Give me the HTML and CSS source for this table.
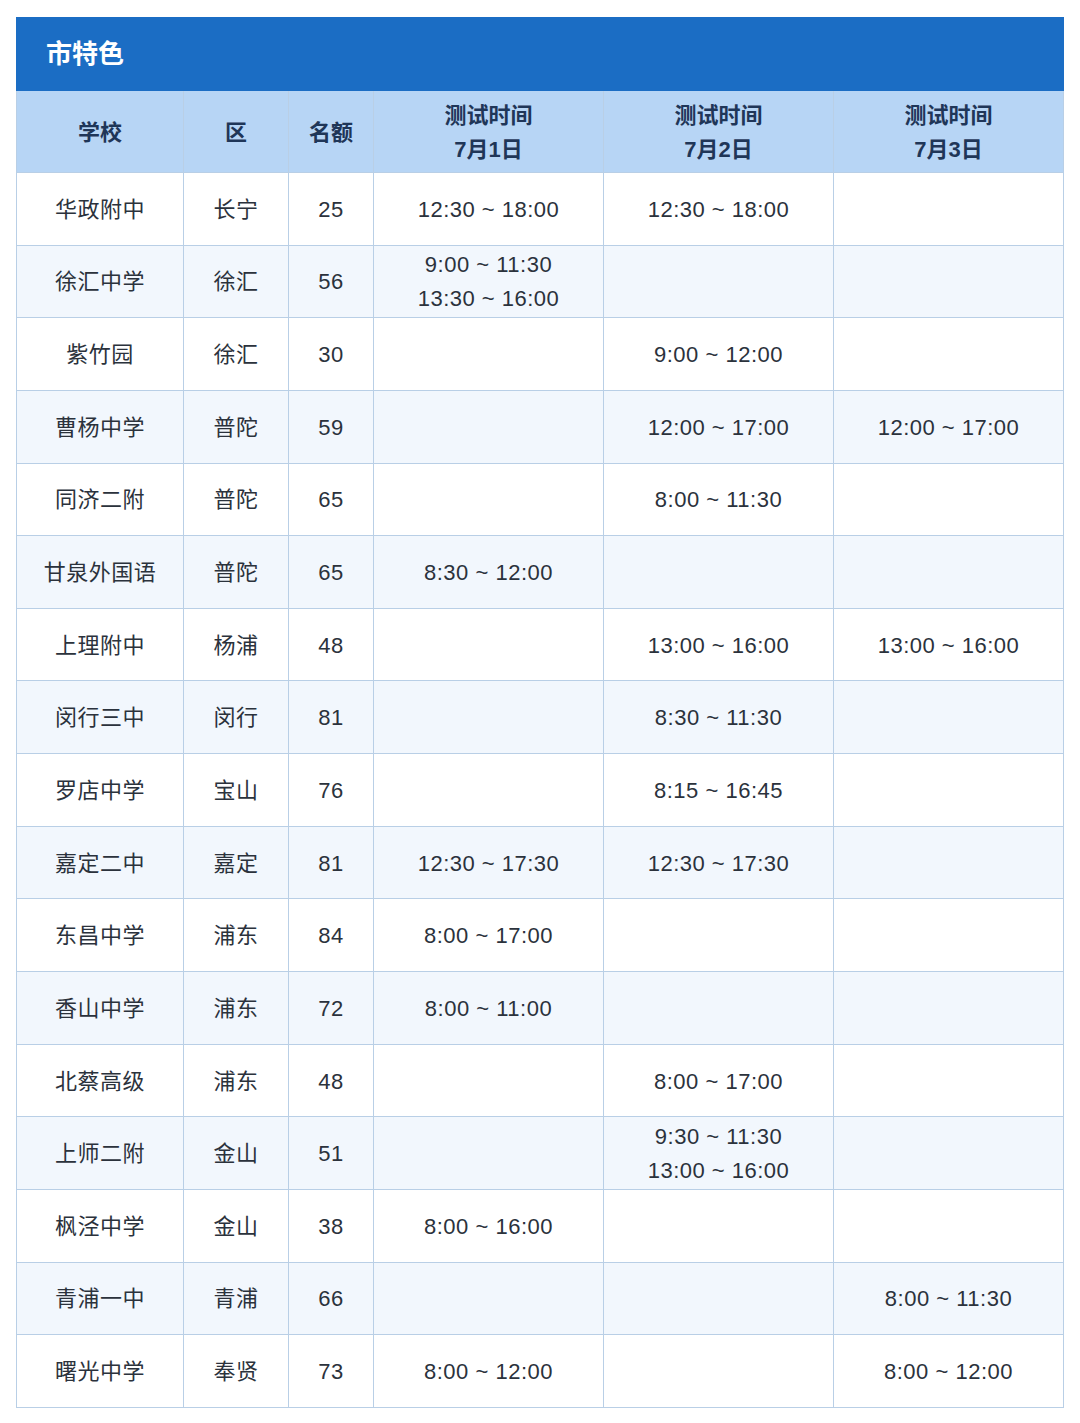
FILE: index.html
```html
<!DOCTYPE html>
<html lang="zh-CN">
<head>
<meta charset="utf-8">
<link rel="stylesheet" href="styles.css">
</head>
<body>
<div class="wrap">
  <div class="title">市特色</div>
  <table class="sched">
    <colgroup>
      <col class="c-school"><col class="c-dist"><col class="c-num"><col class="c-time"><col class="c-time"><col class="c-time">
    </colgroup>
    <thead>
      <tr>
        <th>学校</th><th>区</th><th>名额</th>
        <th>测试时间<br>7月1日</th><th>测试时间<br>7月2日</th><th>测试时间<br>7月3日</th>
      </tr>
    </thead>
    <tbody>
      <tr><td>华政附中</td><td>长宁</td><td>25</td><td>12:30 ~ 18:00</td><td>12:30 ~ 18:00</td><td></td></tr>
      <tr><td>徐汇中学</td><td>徐汇</td><td>56</td><td>9:00 ~ 11:30<br>13:30 ~ 16:00</td><td></td><td></td></tr>
      <tr><td>紫竹园</td><td>徐汇</td><td>30</td><td></td><td>9:00 ~ 12:00</td><td></td></tr>
      <tr><td>曹杨中学</td><td>普陀</td><td>59</td><td></td><td>12:00 ~ 17:00</td><td>12:00 ~ 17:00</td></tr>
      <tr><td>同济二附</td><td>普陀</td><td>65</td><td></td><td>8:00 ~ 11:30</td><td></td></tr>
      <tr><td>甘泉外国语</td><td>普陀</td><td>65</td><td>8:30 ~ 12:00</td><td></td><td></td></tr>
      <tr><td>上理附中</td><td>杨浦</td><td>48</td><td></td><td>13:00 ~ 16:00</td><td>13:00 ~ 16:00</td></tr>
      <tr><td>闵行三中</td><td>闵行</td><td>81</td><td></td><td>8:30 ~ 11:30</td><td></td></tr>
      <tr><td>罗店中学</td><td>宝山</td><td>76</td><td></td><td>8:15 ~ 16:45</td><td></td></tr>
      <tr><td>嘉定二中</td><td>嘉定</td><td>81</td><td>12:30 ~ 17:30</td><td>12:30 ~ 17:30</td><td></td></tr>
      <tr><td>东昌中学</td><td>浦东</td><td>84</td><td>8:00 ~ 17:00</td><td></td><td></td></tr>
      <tr><td>香山中学</td><td>浦东</td><td>72</td><td>8:00 ~ 11:00</td><td></td><td></td></tr>
      <tr><td>北蔡高级</td><td>浦东</td><td>48</td><td></td><td>8:00 ~ 17:00</td><td></td></tr>
      <tr><td>上师二附</td><td>金山</td><td>51</td><td></td><td>9:30 ~ 11:30<br>13:00 ~ 16:00</td><td></td></tr>
      <tr><td>枫泾中学</td><td>金山</td><td>38</td><td>8:00 ~ 16:00</td><td></td><td></td></tr>
      <tr><td>青浦一中</td><td>青浦</td><td>66</td><td></td><td></td><td>8:00 ~ 11:30</td></tr>
      <tr><td>曙光中学</td><td>奉贤</td><td>73</td><td>8:00 ~ 12:00</td><td></td><td>8:00 ~ 12:00</td></tr>
    </tbody>
  </table>
</div>
</body>
</html>
```

FILE: styles.css
```css
html, body {
  margin: 0;
  padding: 0;
  background: #ffffff;
}
body {
  font-family: "Liberation Sans", "Noto Sans CJK SC", sans-serif;
  color: #2b323c;
}
.wrap {
  margin: 17px 0 0 16px;
  width: 1048px;
}
.title {
  height: 74px;
  box-sizing: border-box;
  background: #1b6dc4;
  color: #ffffff;
  font-size: 26px;
  font-weight: 700;
  line-height: 74px;
  padding-left: 30px;
}
.sched {
  width: 1048px;
  border-collapse: collapse;
  table-layout: fixed;
}
.c-school { width: 167px; }
.c-dist { width: 105px; }
.c-num { width: 85px; }
.c-time { width: 230px; }
.sched th, .sched td {
  border: 1px solid #b9cfe6;
  text-align: center;
  vertical-align: middle;
  padding: 0;
  font-size: 22px;
  line-height: 34px;
}
.sched th {
  background: #b7d5f5;
  color: #1f3658;
  font-weight: 700;
  height: 79px;
  border-top: none;
  padding-top: 2px;
}
.sched td {
  height: 69.65px;
  font-weight: 400;
  letter-spacing: 0.5px;
  padding-top: 2px;
}
.sched tbody tr:nth-child(even) td {
  background: #f2f7fd;
}
```
